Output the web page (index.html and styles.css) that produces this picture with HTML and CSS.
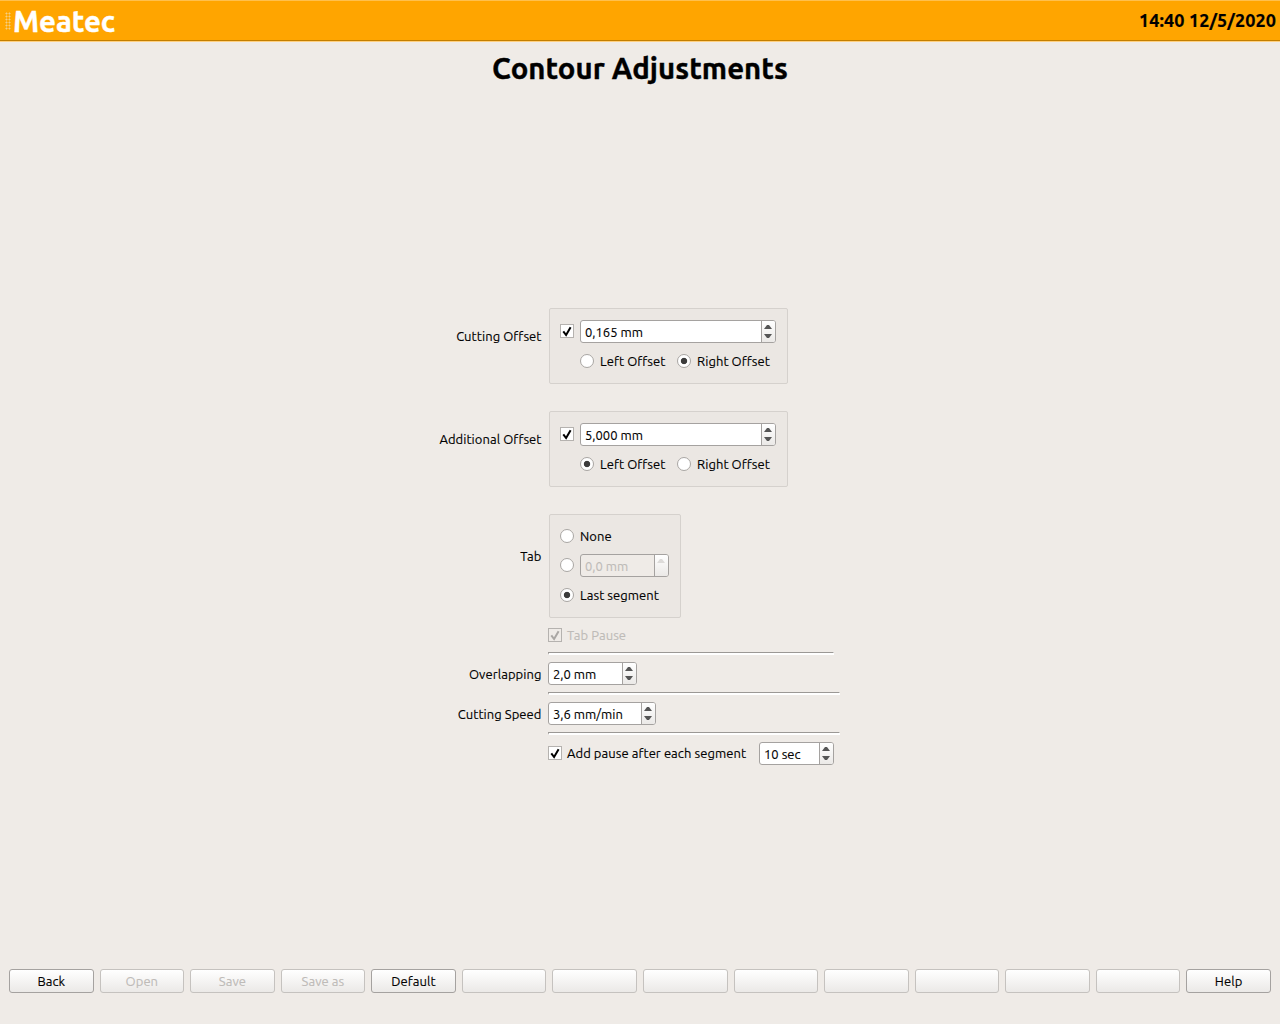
FILE: index.html
```html
<!DOCTYPE html>
<html lang="en">
<head>
<meta charset="utf-8">
<title>Contour Adjustments</title>
<link rel="stylesheet" href="styles.css">
</head>
<body>
<svg width="0" height="0" class="defs">
  <symbol id="tick" viewBox="0 0 14 14"><path d="M3.3 7.3 L6.1 11 L10.6 3.2" fill="none" stroke="currentColor" stroke-width="2"/></symbol>
  <symbol id="arrows" viewBox="0 0 13 21"><path d="M2 8 L5 4 H7 L10 8Z M2 13 L5 17 H7 L10 13Z" fill="#555"/></symbol>
  <symbol id="arrow-up" viewBox="0 0 13 21"><path d="M2 8 L5 4 H7 L10 8Z" fill="#dddbd9"/></symbol>
</svg>
<header class="toolbar">
  <span class="grip"></span>
  <span class="brand">Meatec</span>
  <span class="clock">14:40 12/5/2020</span>
</header>
<main>
  <h1>Contour Adjustments</h1>
  <form class="form">
    <div class="row offset-row">
      <label>Cutting Offset</label>
      <div class="group">
        <div class="line"><span class="check"><svg><use href="#tick"/></svg></span><span class="spin wide"><span class="value">0,165 mm</span><svg class="step"><use href="#arrows"/></svg></span></div>
        <div class="line radios"><span class="radio"></span><span class="opt left">Left Offset</span><span class="radio on"></span><span class="opt">Right Offset</span></div>
      </div>
    </div>
    <div class="row offset-row">
      <label>Additional Offset</label>
      <div class="group">
        <div class="line"><span class="check"><svg><use href="#tick"/></svg></span><span class="spin wide"><span class="value">5,000 mm</span><svg class="step"><use href="#arrows"/></svg></span></div>
        <div class="line radios"><span class="radio on"></span><span class="opt left">Left Offset</span><span class="radio"></span><span class="opt">Right Offset</span></div>
      </div>
    </div>
    <div class="row tab-row">
      <label>Tab</label>
      <div class="group tab-group">
        <div class="line"><span class="radio"></span><span class="opt">None</span></div>
        <div class="line mid"><span class="radio"></span><span class="spin tab-spin off"><span class="value">0,0 mm</span><svg class="step"><use href="#arrow-up"/></svg></span></div>
        <div class="line"><span class="radio on"></span><span class="opt">Last segment</span></div>
      </div>
    </div>
    <div class="row pause-row off"><div></div><div class="line"><span class="check"><svg><use href="#tick"/></svg></span><span class="opt">Tab Pause</span></div></div>
    <div class="rule short"></div>
    <div class="row"><label>Overlapping</label><span class="spin overlap"><span class="value">2,0 mm</span><svg class="step"><use href="#arrows"/></svg></span></div>
    <div class="rule"></div>
    <div class="row"><label>Cutting Speed</label><span class="spin speed"><span class="value">3,6 mm/min</span><svg class="step"><use href="#arrows"/></svg></span></div>
    <div class="rule"></div>
    <div class="row"><div></div><div class="line last"><span class="check"><svg><use href="#tick"/></svg></span><span class="opt">Add pause after each segment</span><span class="spin sec"><span class="value">10 sec</span><svg class="step"><use href="#arrows"/></svg></span></div></div>
  </form>
</main>
<footer class="actions">
  <button>Back</button>
  <button disabled>Open</button>
  <button disabled>Save</button>
  <button disabled>Save as</button>
  <button>Default</button>
  <button disabled></button>
  <button disabled></button>
  <button disabled></button>
  <button disabled></button>
  <button disabled></button>
  <button disabled></button>
  <button disabled></button>
  <button disabled></button>
  <button>Help</button>
</footer>
</body>
</html>
```
FILE: styles.css
```css
* { box-sizing: border-box; }
body {
  margin: 0;
  height: 1024px;
  display: flex;
  flex-direction: column;
  background: #efebe7;
  color: #000;
  font: 13px/20px Ubuntu, "Noto Sans", sans-serif;
  letter-spacing: 0.06px;
  -webkit-text-stroke: 0.12px;
  white-space: nowrap;
  overflow: hidden;
}
.defs { position: absolute; }
.toolbar {
  flex: none;
  height: 42px;
  display: flex;
  align-items: center;
  padding: 0 4px 0 5px;
  background: #ffa500;
  border-top: 1px solid #ffc04d;
  border-bottom: 1px solid #ffd080;
  box-shadow: inset 0 -1px #c27e00;
  font-weight: bold;
}
.grip {
  width: 6px;
  height: 18px;
  margin-right: 2px;
  background: radial-gradient(circle at 1.5px 1.5px, #f6cf85 0.8px, transparent 1.2px) 0 0 / 3px 3px;
}
.brand { color: #fff; font-size: 29.33px; letter-spacing: -0.05px; margin-top: 2px; -webkit-text-stroke: 0.4px; }
.clock { margin-left: auto; font-size: 18px; letter-spacing: 0.1px; margin-top: -3px; -webkit-text-stroke: 0.2px; }
main { flex: 1; }
h1 {
  margin: 9px 0 0;
  height: 35px;
  text-align: center;
  font-size: 29.33px;
  line-height: 36px;
  letter-spacing: 0.05px;
  -webkit-text-stroke: 0.4px;
}
.form {
  width: 402px;
  margin: 222px auto 0;
}
.row {
  display: grid;
  grid-template-columns: 102px 292px;
  column-gap: 7px;
  height: 23px;
  align-items: center;
}
.row label { display: block; text-align: right; line-height: 20px; margin: 0 -0.5px 0 -20px; }
.offset-row { height: 76px; margin-bottom: 27px; align-items: start; }
.offset-row label { margin-top: 18px; }
.tab-row { height: 104px; align-items: start; }
.tab-row label { margin-top: 32px; }
.group {
  width: 239px;
  height: 76px;
  margin-left: 1px;
  padding: 11px 10px;
  border: 1px solid #d5d1cd;
  border-radius: 2px;
  background: #ebe7e3;
}
.line { display: flex; align-items: center; height: 23px; }
.radios { margin-top: 6px; padding-left: 20px; }
.tab-group { width: 132px; height: 104px; padding: 11px 10px; }
.tab-group .line { height: 20px; }
.tab-group .mid { height: 23px; margin: 8px 0; }
.check, .radio {
  flex: none;
  width: 14px;
  height: 14px;
  border: 1px solid #b5b2af;
  background: #fff;
}
.check svg { display: block; width: 14px; height: 14px; margin: -1px; }
.group .check, .last .check, .mid .radio { margin-bottom: 2px; }
.radio { border-radius: 50%; border-color: #a9a6a3; }
.radio.on { background: radial-gradient(circle, #3c3c3c 2.8px, #fff 3.6px); }
.opt { margin-left: 6px; }
.opt.left { width: 77px; }
.spin {
  display: flex;
  height: 23px;
  border: 1px solid #a5a2a0;
  border-radius: 3px;
  background: #fff;
  overflow: hidden;
}
.spin .value { flex: 1; padding-left: 4px; line-height: 23px; letter-spacing: 0; }
.step {
  flex: none;
  width: 14px;
  height: 21px;
  border-left: 1px solid #a5a2a0;
  background: linear-gradient(#fff, #ebe9e7);
}
.wide { width: 196px; margin-left: 6px; }
.tab-spin { width: 89px; margin-left: 6px; }
.overlap { width: 89px; }
.speed { width: 108px; }
.sec { width: 75px; margin-left: auto; }
.off { color: #bebbb8; }
.off .check, .spin.off { background: #efebe7; }
.off .check { color: #aaa7a4; }
.pause-row { height: 14px; margin-top: 10px; }
.pause-row .opt, .last .opt { margin-left: 5px; }
.last .opt { margin-bottom: 2px; }
.pause-row .line { height: 14px; }
.last { width: 286px; }
.rule {
  width: 292px;
  height: 3px;
  margin: 7px 0 7px 109px;
  border-top: 1px solid #9b9895;
  border-left: 1px solid #9b9895;
  border-right: 1px solid #fff;
  border-bottom: 2px solid #fff;
}
.rule.short { width: 286px; margin-top: 10px; }
.actions {
  flex: none;
  display: flex;
  gap: 6px;
  height: 55px;
  padding: 0 9.15px 31px 9px;
}
.actions button {
  flex: 1 1 0;
  min-width: 0;
  height: 24px;
  padding: 0;
  border: 1px solid #a5a2a0;
  border-radius: 3px;
  background: linear-gradient(#fff, #ebe9e7);
  color: #000;
  font: inherit;
  letter-spacing: inherit;
}
.actions button:disabled { border-color: #c5c2bf; color: #bebbb8; }
```
